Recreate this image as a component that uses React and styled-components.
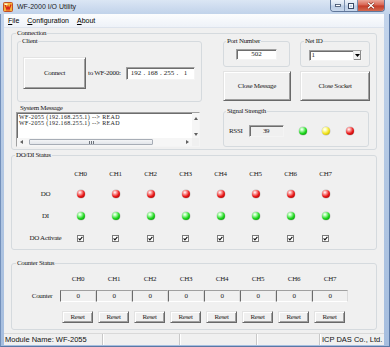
import React from "react";
import styled, { createGlobalStyle } from "styled-components";

const channels = [0, 1, 2, 3, 4, 5, 6, 7];

const LED_COLORS = {
  red: ["#ffb0b0", "#e81818", "#8a0000"],
  green: ["#b8ffb8", "#1ed61e", "#067006"],
  yellow: ["#ffffc0", "#f2e41e", "#a08e00"],
};

const GlobalStyle = createGlobalStyle`
  html, body {
    margin: 0;
    padding: 0;
    background: #f0f0f0;
  }
  * {
    box-sizing: border-box;
  }
`;

const Window = styled.div`
  width: 390px;
  height: 347px;
  display: flex;
  flex-direction: column;
  overflow: hidden;
  background: linear-gradient(180deg, #c4d5ec 0%, #b2c7e3 50%, #a6bedf 100%);
  font-family: "Liberation Serif", "Times New Roman", serif;
  color: #1a1a1a;
`;

const TitleBar = styled.div`
  height: 14px;
  flex: none;
  display: flex;
  align-items: center;
  padding-left: 3px;
  background: linear-gradient(180deg, #dbe6f4 0%, #cbdaee 60%, #c1d3ea 100%);
`;

const Title = styled.span`
  flex: 1;
  margin-left: 4px;
  font-family: "Liberation Sans", Arial, sans-serif;
  font-size: 7px;
  line-height: 14px;
  color: #1b1b1b;
`;

const CaptionButtons = styled.div`
  align-self: flex-start;
  display: flex;
  height: 12px;
  margin-right: 5px;
  border: 1px solid #60779a;
  border-top: none;
  border-radius: 0 0 4px 4px;
  overflow: hidden;
`;

const CaptionButton = styled.div`
  width: ${(p) => (p.$close ? 27 : 13)}px;
  display: flex;
  align-items: center;
  justify-content: center;
  background: ${(p) =>
    p.$close
      ? "linear-gradient(180deg, #eaa89a 0%, #d8624f 48%, #c43b28 52%, #d46a4f 100%)"
      : "linear-gradient(180deg, #eef3fa 0%, #d3dfee 48%, #bccde5 52%, #c9d8ec 100%)"};
  & + & {
    border-left: 1px solid #7b8fae;
  }
`;

const Frame = styled.div`
  flex: 1;
  display: flex;
  flex-direction: column;
  padding: 0 5px 1px 3px;
  border-left: 1px solid #7390bb;
  border-right: 1px solid #5a78a5;
  border-bottom: 1px solid #5a78a5;
`;

const MenuBar = styled.div`
  height: 14px;
  flex: none;
  display: flex;
  align-items: center;
  background: linear-gradient(180deg, #fcfdfe 0%, #eef2f8 100%);
  border-bottom: 1px solid #dde3ec;
  font-family: "Liberation Sans", Arial, sans-serif;
  font-size: 7px;
  color: #000;
`;

const MenuItem = styled.span`
  padding: 0 4px;
  line-height: 13px;
`;

const Client = styled.div`
  height: 305px;
  flex: none;
  display: flex;
  flex-direction: column;
  padding: 1px 7px 3px 7px;
  background: #f0f0f0;
`;

const Group = styled.fieldset`
  margin: 0;
  padding: 0;
  min-width: 0;
  border: 1px solid #d5dade;
  border-radius: 3px;
`;

const Legend = styled.legend`
  margin-left: ${(p) => p.$x - 2}px;
  padding: 0 1px;
  font-size: 7px;
  line-height: 8px;
  letter-spacing: -0.3px;
  white-space: nowrap;
`;

const ConnBody = styled.div`
  display: flex;
  gap: 21px;
  padding: 0 6px 2px 4px;
`;

const LeftCol = styled.div`
  width: 186px;
  display: flex;
  flex-direction: column;
`;

const RightCol = styled.div`
  width: 147px;
  display: flex;
  flex-direction: column;
`;

const ClientGroup = styled(Group)`
  width: 185px;
  margin-left: 1px;
`;

const ClientRow = styled.div`
  display: flex;
  align-items: center;
  padding: 12px 0 12px 5px;
`;

const Button = styled.button`
  width: ${(p) => p.$w}px;
  height: ${(p) => p.$h}px;
  flex: none;
  margin: 0;
  padding: 0;
  font-family: inherit;
  font-size: 7px;
  letter-spacing: -0.3px;
  color: #1a1a1a;
  background: #f0f0f0;
  border: 1px solid;
  border-color: #e3e3e3 #696969 #696969 #e3e3e3;
  box-shadow: inset 1px 1px #fff, inset -1px -1px #a0a0a0;
`;

const InlineLabel = styled.span`
  margin-left: 2px;
  font-size: 7px;
  letter-spacing: -0.3px;
  white-space: nowrap;
`;

const Sunken = styled.div`
  border: 1px solid;
  border-color: #a0a0a0 #f4f4f4 #f4f4f4 #a0a0a0;
  box-shadow: inset 1px 1px #6d6d6d;
`;

const IpBox = styled(Sunken)`
  width: 69px;
  height: 13px;
  margin-left: 5px;
  display: flex;
  align-items: center;
  padding-left: 3px;
  background: #fff;
  font-size: 7px;
`;

const Octet = styled.span`
  width: 13px;
  text-align: center;
`;

const Dot = styled.span`
  width: 3.5px;
  text-align: center;
`;

const SysLabel = styled.div`
  margin: 2px 0 0 4px;
  font-size: 7px;
  line-height: 8px;
  letter-spacing: -0.3px;
`;

const MsgBox = styled(Sunken)`
  width: 184px;
  height: 35px;
  display: grid;
  grid-template-columns: 1fr 7px;
  grid-template-rows: 1fr 8px;
  background: #fff;
`;

const MsgLines = styled.div`
  padding: 1px 0 0 2px;
  font-size: 6px;
  line-height: 6.3px;
  letter-spacing: 0.35px;
  white-space: nowrap;
  overflow: hidden;
`;

const VScroll = styled.div`
  display: flex;
  flex-direction: column;
  justify-content: space-between;
  align-items: center;
  padding: 4px 0 2px;
  background: #f6f6f6;
`;

const HScroll = styled.div`
  display: flex;
  align-items: center;
  background: #f6f6f6;
`;

const ScrollArrow = styled.span`
  width: ${(p) => p.$w || 7}px;
  display: flex;
  justify-content: center;
  align-items: center;
`;

const Track = styled.div`
  flex: 1;
  display: flex;
  align-items: center;
  padding-left: 3px;
`;

const Thumb = styled.div`
  width: 124px;
  height: 6px;
  display: flex;
  justify-content: center;
  align-items: center;
  gap: 1px;
  border: 1px solid #a7adb6;
  border-radius: 1px;
  background: linear-gradient(180deg, #f4f5f7 0%, #e2e5ea 100%);
  span {
    width: 1px;
    height: 3px;
    background: #6e747c;
  }
`;

const Corner = styled.div`
  background: #f0f0f0;
`;

const TopRow = styled.div`
  display: flex;
  gap: 10px;
`;

const PortGroup = styled(Group)`
  width: ${(p) => p.$w}px;
`;

const FieldHolder = styled.div`
  display: flex;
  justify-content: center;
  padding: ${(p) => p.$pt}px 0 ${(p) => 10 - p.$pt}px;
`;

const PortInput = styled(Sunken)`
  width: 41px;
  height: 11px;
  background: #fff;
  font-size: 7px;
  line-height: 9px;
  text-align: center;
`;

const Combo = styled(Sunken)`
  width: 53px;
  height: 11px;
  display: flex;
  align-items: stretch;
  background: #fff;
  font-size: 7px;
  line-height: 9px;
`;

const ComboText = styled.span`
  flex: 1;
  padding-left: 2px;
`;

const ComboButton = styled.span`
  width: 8px;
  display: flex;
  align-items: center;
  justify-content: center;
  background: #f0f0f0;
  border-left: 1px solid #e3e3e3;
  box-shadow: inset -1px -1px #8a8a8a;
`;

const ButtonRow = styled.div`
  display: flex;
  gap: 9px;
  margin-top: 4px;
`;

const SignalGroup = styled(Group)`
  width: 146px;
  margin-top: 6px;
`;

const SignalRow = styled.div`
  height: 31px;
  display: flex;
  align-items: center;
  padding-left: 5px;
  font-size: 7px;
  letter-spacing: -0.3px;
`;

const ReadBox = styled(Sunken)`
  width: ${(p) => p.$w}px;
  height: 12px;
  margin-left: ${(p) => p.$ml || 0}px;
  background: #f0f0f0;
  font-size: 7px;
  line-height: 10px;
  text-align: center;
`;

const Led = styled.span`
  width: 8px;
  height: 8px;
  flex: none;
  margin-left: ${(p) => p.$ml || 0}px;
  border-radius: 50%;
  background: radial-gradient(
    circle at 36% 30%,
    #ffffff 0,
    ${(p) => LED_COLORS[p.$c][0]} 18%,
    ${(p) => LED_COLORS[p.$c][1]} 55%,
    ${(p) => LED_COLORS[p.$c][2]} 100%
  );
  box-shadow: 0 0 0 0.5px rgba(0, 0, 0, 0.2);
`;

const DioGroup = styled(Group)`
  margin-top: 1px;
`;

const IoGrid = styled.div`
  display: grid;
  grid-template-columns: repeat(9, 35px);
  grid-template-rows: 20px 20px 23px 22px;
  align-items: center;
  justify-items: center;
  padding: 5px 0 0 16px;
  font-size: 7px;
  letter-spacing: -0.3px;
`;

const CounterGroup = styled(Group)`
  margin-top: 9px;
`;

const CounterGrid = styled.div`
  display: grid;
  grid-template-columns: repeat(9, 36px);
  grid-template-rows: 14px 16px 21px;
  align-items: center;
  padding: 5px 0 6px 12px;
  font-size: 7px;
  letter-spacing: -0.3px;
`;

const HeadCell = styled.span`
  text-align: center;
  white-space: nowrap;
`;

const RowLabel = styled.span`
  text-align: center;
  white-space: nowrap;
  align-self: ${(p) => (p.$end ? "end" : "center")};
  line-height: 12px;
`;

const CounterBox = styled.div`
  align-self: end;
  height: 12px;
  background: #f0f0f0;
  border-left: 1px solid #6b6b6b;
  border-top: 1px solid #a0a0a0;
  border-bottom: 1px solid #fff;
  border-right: 1px solid #dadada;
  line-height: 10px;
  text-align: center;
`;

const ResetButton = styled(Button)`
  align-self: end;
  margin-left: 2px;
`;

const StatusBar = styled.div`
  height: 12px;
  flex: none;
  display: flex;
  background: #f0f0f0;
  border-top: 1px solid #d9d9d9;
  font-family: "Liberation Sans", Arial, sans-serif;
  font-size: 7.5px;
  color: #111;
`;

const Pane = styled.div`
  width: ${(p) => p.$w}px;
  flex: none;
  padding-left: ${(p) => p.$pl || 1}px;
  line-height: 11px;
  white-space: nowrap;
  border-right: 1px solid #c8c8c8;
  box-shadow: 1px 0 #fff;
  &:last-child {
    flex: 1;
    border-right: none;
    box-shadow: none;
  }
`;

const Tri = ({ dir }) => {
  const pts = {
    up: "0,3 2,0 4,3",
    down: "0,0 4,0 2,3",
    left: "3,0 3,4 0,2",
    right: "0,0 0,4 3,2",
  };
  const vertical = dir === "up" || dir === "down";
  return (
    <svg width={vertical ? 4 : 3} height={vertical ? 3 : 4} viewBox={vertical ? "0 0 4 3" : "0 0 3 4"}>
      <polygon points={pts[dir]} fill="#606060" />
    </svg>
  );
};

const AppIcon = () => (
  <svg width="10" height="10" viewBox="0 0 10 10">
    <rect x="0.5" y="0.5" width="9" height="9" rx="1" fill="#f6b33a" stroke="#c0502a" />
    <path d="M2 2.5 L4 7.5 L5 4.5 L6 7.5 L8 2.5" fill="none" stroke="#d8281c" strokeWidth="1.3" />
    <rect x="1.5" y="1.5" width="3" height="1.5" fill="#fff6d0" />
  </svg>
);

const Check = () => (
  <svg width="7" height="7" viewBox="0 0 7 7">
    <rect x="0.5" y="0.5" width="6" height="6" fill="#fff" stroke="#7a7a7a" />
    <path d="M1.6 3.4 L2.9 4.8 L5.4 1.8" fill="none" stroke="#111" strokeWidth="1.1" />
  </svg>
);

const App = () => {
  return (
    <>
      <GlobalStyle />
      <Window>
        <TitleBar>
          <AppIcon />
          <Title>WF-2000 I/O Utility</Title>
          <CaptionButtons>
            <CaptionButton>
              <svg width="6" height="3" viewBox="0 0 6 3">
                <rect x="0.5" y="0.5" width="5" height="2" fill="#fff" stroke="#3a4a66" strokeWidth="0.8" />
              </svg>
            </CaptionButton>
            <CaptionButton>
              <svg width="6" height="6" viewBox="0 0 6 6">
                <rect x="0.5" y="0.5" width="5" height="5" fill="none" stroke="#3a4a66" strokeWidth="1" />
                <rect x="1.5" y="1.5" width="3" height="3" fill="none" stroke="#fff" strokeWidth="0.8" />
              </svg>
            </CaptionButton>
            <CaptionButton $close>
              <svg width="8" height="7" viewBox="0 0 8 7">
                <path d="M1 0.8 L7 6.2 M7 0.8 L1 6.2" stroke="#7a2010" strokeWidth="2.4" />
                <path d="M1 0.8 L7 6.2 M7 0.8 L1 6.2" stroke="#fff" strokeWidth="1.4" />
              </svg>
            </CaptionButton>
          </CaptionButtons>
        </TitleBar>

        <Frame>
          <MenuBar>
            <MenuItem><u>F</u>ile</MenuItem>
            <MenuItem><u>C</u>onfiguration</MenuItem>
            <MenuItem><u>A</u>bout</MenuItem>
          </MenuBar>

          <Client>
            <Group>
              <Legend $x={6}>Connection</Legend>
              <ConnBody>
                <LeftCol>
                  <ClientGroup>
                    <Legend $x={5}>Client</Legend>
                    <ClientRow>
                      <Button $w={63} $h={32}>Connect</Button>
                      <InlineLabel>to WF-2000:</InlineLabel>
                      <IpBox>
                        <Octet>192</Octet>
                        <Dot>.</Dot>
                        <Octet>168</Octet>
                        <Dot>.</Dot>
                        <Octet>255</Octet>
                        <Dot>.</Dot>
                        <Octet>1</Octet>
                      </IpBox>
                    </ClientRow>
                  </ClientGroup>

                  <SysLabel>System Message</SysLabel>
                  <MsgBox>
                    <MsgLines>
                      <div>WF-2055 (192.168.255.1) --&gt; READ</div>
                      <div>WF-2055 (192.168.255.1) --&gt; READ</div>
                    </MsgLines>
                    <VScroll>
                      <Tri dir="up" />
                      <Tri dir="down" />
                    </VScroll>
                    <HScroll>
                      <ScrollArrow $w={9}><Tri dir="left" /></ScrollArrow>
                      <Track>
                        <Thumb>
                          <span />
                          <span />
                          <span />
                        </Thumb>
                      </Track>
                      <ScrollArrow $w={9}><Tri dir="right" /></ScrollArrow>
                    </HScroll>
                    <Corner />
                  </MsgBox>
                </LeftCol>

                <RightCol>
                  <TopRow>
                    <PortGroup $w={67}>
                      <Legend $x={4}>Port Number</Legend>
                      <FieldHolder $pt={4}>
                        <PortInput>502</PortInput>
                      </FieldHolder>
                    </PortGroup>
                    <PortGroup $w={70}>
                      <Legend $x={5}>Net ID</Legend>
                      <FieldHolder $pt={5}>
                        <Combo>
                          <ComboText>1</ComboText>
                          <ComboButton>
                            <svg width="5" height="3" viewBox="0 0 5 3">
                              <polygon points="0,0 5,0 2.5,3" fill="#000" />
                            </svg>
                          </ComboButton>
                        </Combo>
                      </FieldHolder>
                    </PortGroup>
                  </TopRow>

                  <ButtonRow>
                    <Button $w={68} $h={30}>Close Message</Button>
                    <Button $w={70} $h={30}>Close Socket</Button>
                  </ButtonRow>

                  <SignalGroup>
                    <Legend $x={4}>Signal Strength</Legend>
                    <SignalRow>
                      <span>RSSI</span>
                      <ReadBox $w={35} $ml={6}>39</ReadBox>
                      <Led $c="green" $ml={15} />
                      <Led $c="yellow" $ml={15.5} />
                      <Led $c="red" $ml={15.5} />
                    </SignalRow>
                  </SignalGroup>
                </RightCol>
              </ConnBody>
            </Group>

            <DioGroup>
              <Legend $x={5}>DO/DI Status</Legend>
              <IoGrid>
                <span />
                {channels.map((c) => (
                  <HeadCell key={"h" + c}>CH{c}</HeadCell>
                ))}
                <RowLabel>DO</RowLabel>
                {channels.map((c) => (
                  <Led key={"do" + c} $c="red" />
                ))}
                <RowLabel>DI</RowLabel>
                {channels.map((c) => (
                  <Led key={"di" + c} $c="green" />
                ))}
                <RowLabel>DO Activate</RowLabel>
                {channels.map((c) => (
                  <Check key={"ck" + c} />
                ))}
              </IoGrid>
            </DioGroup>

            <CounterGroup>
              <Legend $x={6}>Counter Status</Legend>
              <CounterGrid>
                <span />
                {channels.map((c) => (
                  <HeadCell key={"ch" + c}>CH{c}</HeadCell>
                ))}
                <RowLabel $end>Counter</RowLabel>
                {channels.map((c) => (
                  <CounterBox key={"cb" + c}>0</CounterBox>
                ))}
                <span />
                {channels.map((c) => (
                  <ResetButton key={"rb" + c} $w={31} $h={12}>Reset</ResetButton>
                ))}
              </CounterGrid>
            </CounterGroup>
          </Client>

          <StatusBar>
            <Pane $w={99}>Module Name: WF-2055</Pane>
            <Pane $w={77} />
            <Pane $w={77} />
            <Pane $w={63} />
            <Pane $w={64} $pl={2}>ICP DAS Co., Ltd.</Pane>
          </StatusBar>
        </Frame>
      </Window>
    </>
  );
};

export default App;
